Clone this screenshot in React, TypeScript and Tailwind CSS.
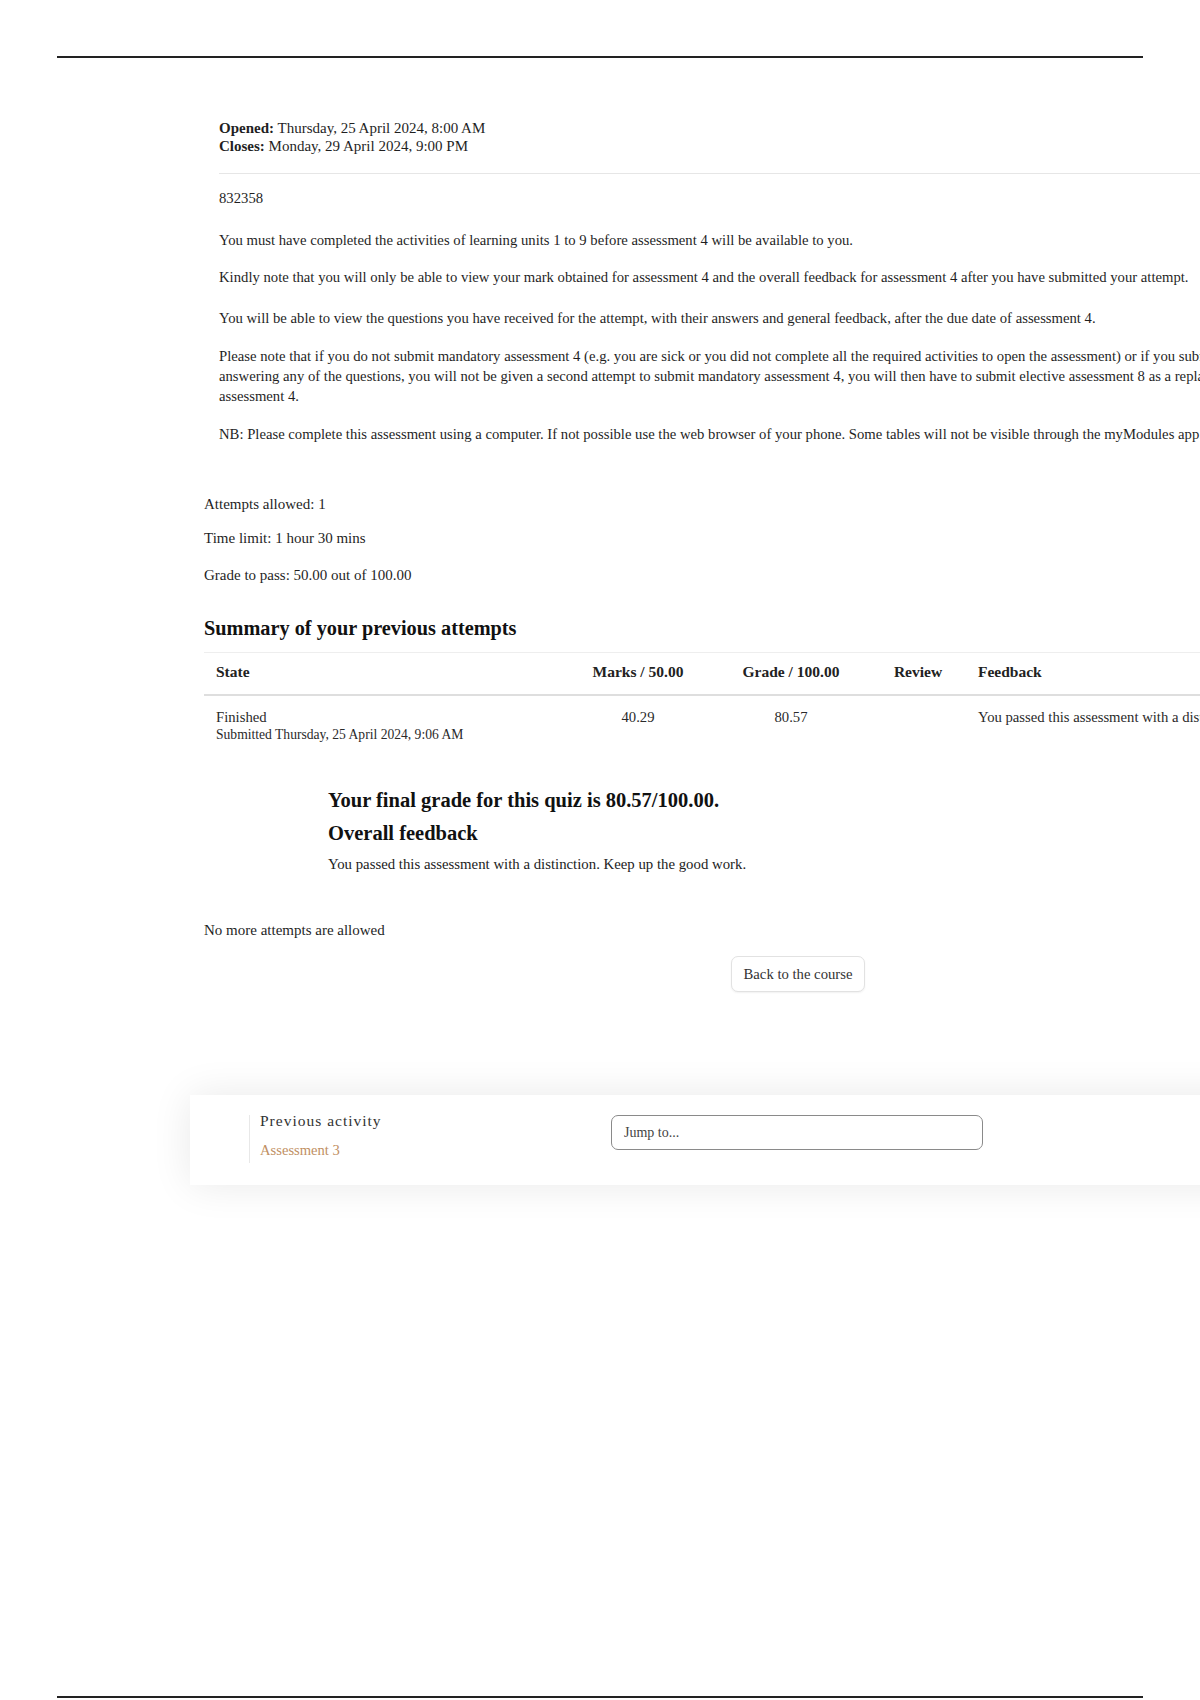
import React from "react";

const serif = "font-['Liberation_Serif','Times_New_Roman',serif]";

function IntroBox() {
  return (
    <div className="ml-[15px] w-[1080px] text-[14.7px] leading-[20px] text-[#1f1f1f]">
      <div className="text-[15px] leading-[18px]">
        <div>
          <span className="font-bold">Opened:</span> Thursday, 25 April 2024, 8:00 AM
        </div>
        <div>
          <span className="font-bold">Closes:</span> Monday, 29 April 2024, 9:00 PM
        </div>
      </div>
      <div className="mt-[18px] border-t border-[#e6e6e6] pt-[14px]">
        <p className="mb-[22px]">832358</p>
        <p className="mb-[17px]">
          You must have completed the activities of learning units 1 to 9 before assessment 4 will be available to you.
        </p>
        <p className="mb-[21px]">
          Kindly note that you will only be able to view your mark obtained for assessment 4 and the overall feedback for
          assessment 4 after you have submitted your attempt.
        </p>
        <p className="mb-[18px]">
          You will be able to view the questions you have received for the attempt, with their answers and general
          feedback, after the due date of assessment 4.
        </p>
        <p className="mb-[18px]">
          Please note that if you do not submit mandatory assessment 4 (e.g. you are sick or you did not complete all the
          required activities to open the assessment) or if you submit without answering any of the questions, you will
          not be given a second attempt to submit mandatory assessment 4, you will then have to submit elective
          assessment 8 as a replacement for assessment 4.
        </p>
        <p className="whitespace-nowrap">
          NB: Please complete this assessment using a computer. If not possible use the web browser of your phone. Some
          tables will not be visible through the myModules app.
        </p>
      </div>
    </div>
  );
}

function AttemptsTable() {
  const cols = "grid grid-cols-[360px_148px_158px_96px_600px]";
  return (
    <div className="mt-[12px] border-t border-[#eeeeee]">
      <div className={`${cols} border-b-2 border-[#dedede] pt-[9px] pb-[13px] text-[15.5px] font-bold leading-[19px] text-[#222]`}>
        <div className="px-[12px]">State</div>
        <div className="px-[12px] text-center">Marks / 50.00</div>
        <div className="px-[12px] text-center">Grade / 100.00</div>
        <div className="px-[12px] text-center">Review</div>
        <div className="px-[12px]">Feedback</div>
      </div>
      <div className={`${cols} pt-[12px] pb-[8px] text-[14.7px] leading-[18px] text-[#2a2a2a]`}>
        <div className="px-[12px]">
          <div>Finished</div>
          <div className="text-[13.6px] leading-[17px]">Submitted Thursday, 25 April 2024, 9:06 AM</div>
        </div>
        <div className="px-[12px] text-center">40.29</div>
        <div className="px-[12px] text-center">80.57</div>
        <div className="px-[12px] text-center"></div>
        <div className="whitespace-nowrap px-[12px]">
          You passed this assessment with a distinction. Keep up the good work.
        </div>
      </div>
    </div>
  );
}

export default function App() {
  return (
    <div className={`${serif} relative flex h-[1700px] w-[1200px] flex-col overflow-hidden bg-white`}>
      <div className="mx-[57px] mt-[56px] h-[2px] bg-[#222]" />

      <main className="ml-[204px] mt-[61px] w-[1188px]">
        <IntroBox />

        <div className="mt-[50px] text-[15px] leading-[20px] text-[#1f1f1f]">
          <p className="mb-[14px]">Attempts allowed: 1</p>
          <p className="mb-[17px]">Time limit: 1 hour 30 mins</p>
          <p>Grade to pass: 50.00 out of 100.00</p>
        </div>

        <h3 className="mt-[31px] text-[20.3px] font-bold leading-[24px] text-[#111]">
          Summary of your previous attempts
        </h3>
        <AttemptsTable />

        <div className="ml-[124px] mt-[37px] text-[#111]">
          <h3 className="text-[20.5px] font-bold leading-[24px]">Your final grade for this quiz is 80.57/100.00.</h3>
          <h3 className="mt-[9px] text-[20.5px] font-bold leading-[24px]">Overall feedback</h3>
          <p className="mt-[9px] text-[14.8px] leading-[20px] text-[#222]">
            You passed this assessment with a distinction. Keep up the good work.
          </p>
        </div>

        <p className="mt-[46px] text-[15px] leading-[20px] text-[#1f1f1f]">No more attempts are allowed</p>

        <div className="mt-[16px] pl-[527px]">
          <button className="h-[36px] w-[134px] rounded-[7px] border border-[#e2e2e2] bg-white text-[14.7px] text-[#333] shadow-[0_1px_2px_rgba(0,0,0,0.06)]">
            Back to the course
          </button>
        </div>
      </main>

      <section className="ml-[190px] mt-[103px] h-[90px] w-[1100px] bg-white shadow-[0_0_40px_rgba(0,0,0,0.09)]">
        <div className="flex items-start pl-[59px] pt-[20px]">
          <div className="h-[48px] w-[300px] border-l border-[#e8e8e8] pl-[10px]">
            <div className="-mt-[2px] text-[15.5px] leading-[16px] tracking-[1px] text-[#333]">Previous activity</div>
            <div className="mt-[13px] text-[14.6px] leading-[16px] text-[#bf8f63]">Assessment 3</div>
          </div>
          <div className="ml-[62px] flex h-[35px] w-[372px] items-center rounded-[7px] border border-[#8a8a8a] px-[12px] text-[14px] text-[#444]">
            Jump to...
          </div>
        </div>
      </section>

      <div className="mx-[57px] mb-[2px] mt-auto h-[2px] bg-[#222]" />
    </div>
  );
}
